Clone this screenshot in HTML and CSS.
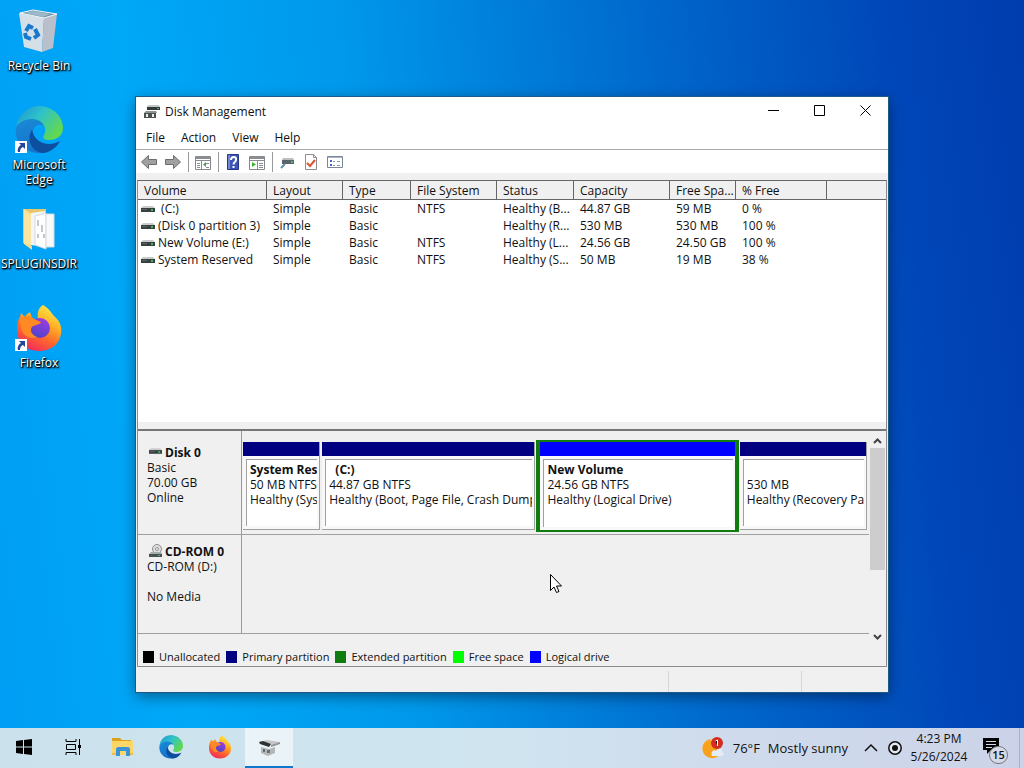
FILE: index.html
```html
<!DOCTYPE html>
<html lang="en">
<head>
    <meta charset="utf-8">
    <title>Disk Management</title>
    <link rel="stylesheet" href="styles.css">
</head>
<body>
    <!-- shared gradients and symbols -->
    <svg class="defs" aria-hidden="true">
        <defs>
            <linearGradient id="edgeTop" x1="0" y1="0" x2="1" y2="0.6">
                <stop offset="0" stop-color="#1c93d6"/>
                <stop offset="0.5" stop-color="#2fc3c8"/>
                <stop offset="1" stop-color="#62d84e"/>
            </linearGradient>
            <linearGradient id="edgeLeft" x1="0" y1="0" x2="0.4" y2="1">
                <stop offset="0" stop-color="#1b8ad6"/>
                <stop offset="1" stop-color="#1473cc"/>
            </linearGradient>
            <linearGradient id="foxBody" x1="0.8" y1="0" x2="0.3" y2="1">
                <stop offset="0" stop-color="#fff04a"/>
                <stop offset="0.35" stop-color="#ffb326"/>
                <stop offset="0.65" stop-color="#ff6a2a"/>
                <stop offset="1" stop-color="#f0285e"/>
            </linearGradient>
            <linearGradient id="foxGlobe" x1="0.7" y1="0" x2="0.3" y2="1">
                <stop offset="0" stop-color="#a03be0"/>
                <stop offset="1" stop-color="#4b45c8"/>
            </linearGradient>
        </defs>
        <symbol id="edge" viewBox="0 0 48 48">
            <path fill="url(#edgeLeft)" d="M1 22C4 9 27 7 29 20C23 16 17 21 18 29C20 39 31 43 43 37C38 44 31 48 23 47C8 46-1 34 1 22Z"/>
            <path fill="#0d4f9e" d="M17 24C12 31 14 44 27 47C35 47 42 41 45 35C34 41 20 38 17 24Z"/>
            <path fill="url(#edgeTop)" d="M1 21C3 8 13 0 25 0C39 1 48 11 48 22C48 31 40 34 34 34C29 34 27 32 29 29C33 22 27 13 17 13C9 13 4 17 1 21Z"/>
        </symbol>
        <symbol id="firefox" viewBox="0 0 48 48">
            <path fill="url(#foxBody)" d="M28 1C35 5 36 9 40 13C46 18 47 25 46 30C44 41 35 47 24 47C11 47 2 38 2 26C2 20 3 16 5 13L6 9L10 13C12 9 14 9 15 8L17 14L23 17C22 9 23 4 28 1Z"/>
            <circle cx="25" cy="24" r="10" fill="url(#foxGlobe)"/>
            <path fill="#ff8a24" d="M5 15C10 11 16 11 19 15L26 18C25 21 20 21 18 22C14 25 16 31 22 33C15 36 8 32 6 24Z"/>
        </symbol>
        <symbol id="shortcut" viewBox="0 0 12 12">
            <path fill="#fff" d="M0 0H12V12H0Z"/>
            <path fill="#24449c" d="M4 2H10V8L8 6C6 7 5 8 5 11H3C2 8 4 5 6 4Z"/>
        </symbol>
        <symbol id="drive" viewBox="0 0 14 8">
            <path fill="#c9cccc" d="M2 1H12L14 3H0Z"/>
            <path fill="#39403f" d="M0 3H14V7H0Z"/>
            <path fill="#5c6463" d="M1 4H6V5H1Z"/>
            <path fill="#35b95a" d="M10 4H12V6H10Z"/>
        </symbol>
        <symbol id="disks" viewBox="0 0 16 16">
            <path fill="#c4c7c8" d="M4 1H15L16 3H3Z"/>
            <path fill="#333838" d="M3 3H16V6H3Z"/>
            <path fill="#4fae68" d="M13 4H15V5H13Z"/>
            <path fill="#8f9394" d="M2 7H12L13 9H0Z"/>
            <path fill="#4c5252" d="M0 9H12V14H0Z"/>
            <path fill="#eee" d="M2 10H4V13H2ZM8 10H10V13H8Z"/>
        </symbol>
    </svg>

    <div class="desktop">
        <nav class="shortcuts" aria-label="Desktop">
            <a href="#" class="shortcut">
                <svg class="shortcut-icon" viewBox="0 0 48 48">
                    <path fill="#6f97ae" d="M5 6L18 3L41 7L29 12Z"/>
                    <path fill="#9db9c7" d="M10 6L19 4L35 7L28 10Z"/>
                    <path fill="#d5dfe8" d="M4 6L29 11L27 45L9 40Z"/>
                    <path fill="#b9c0cb" d="M29 11L42 7L38 41L27 45Z"/>
                    <path fill="none" stroke="#f1f6f9" d="M5 6L29 11L42 7L18 3Z"/>
                    <g fill="none" stroke="#1878cc" stroke-width="4">
                        <path d="M11 24L14 19L18 21"/>
                        <path d="M20 22L23 28L19 31"/>
                        <path d="M16 32L11 30L10 26"/>
                    </g>
                </svg>
                <span class="shortcut-name">Recycle Bin</span>
            </a>
            <a href="#" class="shortcut">
                <svg class="shortcut-icon" viewBox="0 0 48 48"><use href="#edge"/><use href="#shortcut" x="0" y="35" width="12" height="12"/></svg>
                <span class="shortcut-name">Microsoft Edge</span>
            </a>
            <a href="#" class="shortcut">
                <svg class="shortcut-icon" viewBox="0 0 48 48">
                    <path fill="#e8c66a" d="M8 4H31V40H12L8 38Z"/>
                    <path fill="#fbe4a0" d="M9 4L16 9V44L9 39Z"/>
                    <path fill="#f4f5f6" d="M16 8L30 6V42L16 40Z"/>
                    <path fill="#fff" stroke="#d6dadd" d="M20 11L31 8V44L20 40Z"/>
                    <path fill="#f8f9fa" stroke="#d6dadd" d="M31 9H39V42H31Z"/>
                    <path fill="none" stroke="#c3c8cb" stroke-width="2" d="M23 15V21M27 20V27M23 29V33M29 29V33"/>
                    <path fill="#f6d98b" d="M9 38L17 41V45Z"/>
                </svg>
                <span class="shortcut-name">SPLUGINSDIR</span>
            </a>
            <a href="#" class="shortcut">
                <svg class="shortcut-icon" viewBox="0 0 48 48"><use href="#firefox"/><use href="#shortcut" x="0" y="35" width="12" height="12"/></svg>
                <span class="shortcut-name">Firefox</span>
            </a>
        </nav>

        <main class="window">
            <header class="titlebar">
                <svg class="title-icon"><use href="#disks"/></svg>
                <h1 class="title">Disk Management</h1>
                <button type="button" class="win-button" aria-label="Minimize"><svg class="win-glyph" viewBox="0 0 11 11"><path d="M0 5.500H11"/></svg></button>
                <button type="button" class="win-button" aria-label="Maximize"><svg class="win-glyph" viewBox="0 0 11 11"><path d="M.5 .5H10.500V10.500H.5Z"/></svg></button>
                <button type="button" class="win-button" aria-label="Close"><svg class="win-glyph" viewBox="0 0 11 11"><path d="M.5 .5L10.500 10.500M10.500 .5L.5 10.500"/></svg></button>
            </header>
            <nav class="menubar">
                <button type="button" class="menu">File</button>
                <button type="button" class="menu">Action</button>
                <button type="button" class="menu">View</button>
                <button type="button" class="menu">Help</button>
            </nav>
            <div class="toolbar">
                <button type="button" class="tool" aria-label="Back"><svg class="tool-icon" viewBox="0 0 16 16"><path fill="#a0a0a0" stroke="#6c6c6c" d="M.5 8L7.500 1.500V5.500H15.500V10.500H7.500V14.500Z"/></svg></button>
                <button type="button" class="tool" aria-label="Forward"><svg class="tool-icon" viewBox="0 0 16 16"><path fill="#a0a0a0" stroke="#6c6c6c" d="M15.500 8L8.500 1.500V5.500H.5V10.500H8.500V14.500Z"/></svg></button>
                <span class="separator"></span>
                <button type="button" class="tool" aria-label="Show console tree">
                    <svg class="tool-icon" viewBox="0 0 16 16">
                        <path fill="#fff" stroke="#85888c" d="M.5 2.500H15.500V15.500H.5Z"/>
                        <path fill="#8a8d91" d="M1 2H15V5H1ZM1 6H15V7H1ZM6 7H7V15H6ZM2 9H5V10H2ZM2 11H5V12H2ZM2 13H5V14H2ZM11 9H14V10H11ZM11 13H14V14H11Z"/>
                        <path fill="#4d9b52" d="M8 10.500L11 8V13Z"/>
                    </svg>
                </button>
                <span class="separator"></span>
                <button type="button" class="tool" aria-label="Help">
                    <svg class="tool-icon" viewBox="0 0 16 16">
                        <path fill="#3d55b5" stroke="#27378a" d="M2.500 .5H13.500V15.500H2.500Z"/>
                        <path fill="#7385d4" d="M3 1H5V15H3Z"/>
                        <path fill="none" stroke="#fff" stroke-width="2" d="M6 6C6 2 12 2 11 6C11 8 8.500 8 8.500 10.500M8.500 12V14"/>
                    </svg>
                </button>
                <button type="button" class="tool" aria-label="Show action pane">
                    <svg class="tool-icon" viewBox="0 0 16 16">
                        <path fill="#fff" stroke="#85888c" d="M.5 2.500H15.500V15.500H.5Z"/>
                        <path fill="#8a8d91" d="M1 2H15V5H1ZM1 6H15V7H1ZM8 7H9V15H8ZM10 9H14V10H10ZM10 11H14V12H10ZM10 13H14V14H10Z"/>
                        <path fill="#3fb52f" d="M3 8L7 10.500L3 13Z"/>
                    </svg>
                </button>
                <span class="separator"></span>
                <button type="button" class="tool" aria-label="Refresh">
                    <svg class="tool-icon" viewBox="0 0 16 16">
                        <path fill="#b8c0c4" d="M4 4H14L15 6H3Z"/>
                        <path fill="#59656b" d="M3 6H15V10H3Z"/>
                        <path fill="#58b070" d="M12 7H14V9H12Z"/>
                        <path fill="none" stroke="#5f90ad" stroke-width="2" d="M6 10L2 14"/>
                    </svg>
                </button>
                <button type="button" class="tool" aria-label="Check">
                    <svg class="tool-icon" viewBox="0 0 16 16">
                        <path fill="#fff" stroke="#8d8d8d" d="M2.500 .5H10.500L13.500 3.500V15.500H2.500Z"/>
                        <path fill="none" stroke="#8d8d8d" d="M10.500 .5V3.500H13.500"/>
                        <path fill="none" stroke="#e0532f" stroke-width="2" d="M4 9L7 12L12 6"/>
                    </svg>
                </button>
                <button type="button" class="tool" aria-label="Properties">
                    <svg class="tool-icon" viewBox="0 0 16 16">
                        <path fill="#fff" stroke="#7a8798" d="M.5 2.500H15.500V13.500H.5Z"/>
                        <path fill="#a9b4c6" d="M1 3H15V4H1Z"/>
                        <path fill="#4169c8" d="M3 6H5V8H3ZM3 10H5V12H3Z"/>
                        <path fill="#8b96a6" d="M6 7H8V8H6ZM10 7H13V8H10ZM6 11H8V12H6ZM10 11H13V12H10Z"/>
                    </svg>
                </button>
            </div>

            <div class="console">
                <section class="volumes">
                    <table class="volume-table">
                        <colgroup>
                            <col class="col-volume"><col class="col-layout"><col class="col-type"><col class="col-fs">
                            <col class="col-status"><col class="col-capacity"><col class="col-space"><col class="col-percent"><col>
                        </colgroup>
                        <thead>
                            <tr><th>Volume</th><th>Layout</th><th>Type</th><th>File System</th><th>Status</th><th>Capacity</th><th>Free Spa...</th><th>% Free</th><th></th></tr>
                        </thead>
                        <tbody>
                            <tr><td><svg class="drive"><use href="#drive"/></svg>&nbsp;(C:)</td><td>Simple</td><td>Basic</td><td>NTFS</td><td>Healthy (B...</td><td>44.87 GB</td><td>59 MB</td><td>0 %</td><td></td></tr>
                            <tr><td><svg class="drive"><use href="#drive"/></svg>(Disk 0 partition 3)</td><td>Simple</td><td>Basic</td><td></td><td>Healthy (R...</td><td>530 MB</td><td>530 MB</td><td>100 %</td><td></td></tr>
                            <tr><td><svg class="drive"><use href="#drive"/></svg>New Volume (E:)</td><td>Simple</td><td>Basic</td><td>NTFS</td><td>Healthy (L...</td><td>24.56 GB</td><td>24.50 GB</td><td>100 %</td><td></td></tr>
                            <tr><td><svg class="drive"><use href="#drive"/></svg>System Reserved</td><td>Simple</td><td>Basic</td><td>NTFS</td><td>Healthy (S...</td><td>50 MB</td><td>19 MB</td><td>38 %</td><td></td></tr>
                        </tbody>
                    </table>
                </section>

                <section class="disk-pane">
                    <div class="disks">
                        <div class="disk">
                            <div class="disk-label">
                                <h2 class="disk-name"><svg class="disk-icon" viewBox="0 0 16 14"><use href="#drive" x="2" y="2" width="13" height="8"/></svg>Disk 0</h2>
                                <p>Basic</p>
                                <p>70.00 GB</p>
                                <p>Online</p>
                            </div>
                            <div class="partitions">
                                <div class="partition">
                                    <div class="partition-body"><b>System Res</b><p>50 MB NTFS</p><p>Healthy (Sys</p></div>
                                </div>
                                <div class="partition">
                                    <div class="partition-body"><b>&nbsp; (C:)</b><p>44.87 GB NTFS</p><p>Healthy (Boot, Page File, Crash Dump,</p></div>
                                </div>
                                <div class="partition logical">
                                    <div class="partition-body"><b>New Volume</b><p>24.56 GB NTFS</p><p>Healthy (Logical Drive)</p></div>
                                </div>
                                <div class="partition">
                                    <div class="partition-body"><b>&nbsp;</b><p>530 MB</p><p>Healthy (Recovery Pa</p></div>
                                </div>
                            </div>
                        </div>
                        <div class="disk cdrom">
                            <div class="disk-label">
                                <h2 class="disk-name">
                                    <svg class="disk-icon" viewBox="0 0 16 14">
                                        <circle cx="10" cy="5" r="4.500" fill="#dedede" stroke="#8e8e8e"/>
                                        <circle cx="10" cy="5" r="1.500" fill="#fff" stroke="#8e8e8e"/>
                                        <path fill="#a5abab" d="M4 8H14L15 10H2Z"/>
                                        <path fill="#465250" d="M2 10H15V13H2Z"/>
                                        <path fill="#54b473" d="M11 11H13V12H11Z"/>
                                    </svg>CD-ROM 0</h2>
                                <p>CD-ROM (D:)</p>
                                <p>&nbsp;</p>
                                <p>No Media</p>
                            </div>
                            <div class="empty"></div>
                        </div>
                    </div>
                    <div class="scrollbar">
                        <button type="button" class="scroll-button" aria-label="Scroll up"><svg class="scroll-glyph" viewBox="0 0 9 6"><path d="M1 5L4.500 1.500L8 5"/></svg></button>
                        <div class="scroll-track"><div class="scroll-thumb"></div></div>
                        <button type="button" class="scroll-button" aria-label="Scroll down"><svg class="scroll-glyph" viewBox="0 0 9 6"><path d="M1 1L4.500 4.500L8 1"/></svg></button>
                    </div>
                </section>

                <ul class="legend">
                    <li class="unallocated">Unallocated</li>
                    <li class="primary">Primary partition</li>
                    <li class="extended">Extended partition</li>
                    <li class="free">Free space</li>
                    <li class="logical-drive">Logical drive</li>
                </ul>
            </div>
            <footer class="statusbar"><span></span><span></span><span></span></footer>
        </main>

        <svg class="pointer" viewBox="0 0 12 20"><path fill="#fff" stroke="#000" d="M.5 .5V16.500L4 13L6.500 18.500L9 17.500L6.500 12H11.500Z"/></svg>
    </div>

    <footer class="taskbar">
        <button type="button" class="task" aria-label="Start"><svg class="task-small" viewBox="0 0 16 16"><path d="M0 2L7 1V7.500H0ZM8 1L16 0V7.500H8ZM0 8.500H7V15L0 14ZM8 8.500H16V16L8 15Z"/></svg></button>
        <button type="button" class="task" aria-label="Task View">
            <svg class="task-small" viewBox="0 0 16 16">
                <path fill="none" stroke="#000" d="M1 0V2.500H11V0M1.500 5.500H10.500V10.500H1.500ZM1 16V13.500H11V16M14.500 0V16"/>
                <path d="M13 6H16V9H13Z"/>
            </svg>
        </button>
        <button type="button" class="task" aria-label="File Explorer">
            <svg class="task-icon" viewBox="0 0 24 24">
                <path fill="#dba11f" d="M2 3H10L12 5H21V9H2Z"/>
                <path fill="#fcd667" d="M2 6H23V20H2Z"/>
                <path fill="#3a92d8" d="M6 14C6 13 7 12 8 12H18C19 12 20 13 20 14V21H16V16H10V21H6Z"/>
                <path fill="#f0bd44" d="M2 18H6V20H2ZM20 18H23V20H20Z"/>
            </svg>
        </button>
        <button type="button" class="task" aria-label="Microsoft Edge"><svg class="task-icon"><use href="#edge"/></svg></button>
        <button type="button" class="task" aria-label="Firefox"><svg class="task-icon"><use href="#firefox"/></svg></button>
        <button type="button" class="task active" aria-label="Disk Management">
            <svg class="task-icon" viewBox="0 0 24 24">
                <path fill="#c4c6c7" d="M2 7L10 5L23 7L14 10Z"/>
                <path fill="#2f3232" d="M2 7L6 6L14 9L12 12L3 9Z"/>
                <path fill="#8f9394" d="M14 10L23 7V9L14 12Z"/>
                <path fill="#b4b7b8" d="M4 12L12 14L18 12V18L11 21L4 18Z"/>
                <path fill="#6a6d6e" d="M6 14H8V17H6ZM10 15H13V18H10Z"/>
            </svg>
        </button>
        <div class="tray">
            <button type="button" class="weather">
                <svg class="weather-icon" viewBox="0 0 24 24">
                    <path fill="#f7a823" d="M10 3C3 4 0 10 2 16C5 23 14 24 19 19C11 18 7 11 10 3Z"/>
                    <circle cx="10" cy="13" r="8" fill="#f9a01b"/>
                    <path fill="#e4ecf5" d="M11 20C9 16 13 13 15 15C17 11 22 13 21 16C24 17 23 20 20 20Z"/>
                    <circle cx="16" cy="7" r="6" fill="#d42c20"/>
                    <path stroke="#fff" d="M14.500 5L16.500 4V10"/>
                </svg>
                <span>76°F</span><span>Mostly sunny</span>
            </button>
            <button type="button" class="tray-button" aria-label="Show hidden icons"><svg class="tray-icon" viewBox="0 0 14 14"><path fill="none" stroke="#111" stroke-width="1.500" d="M1 10L7 4L13 10"/></svg></button>
            <button type="button" class="tray-button" aria-label="Recording"><svg class="tray-icon" viewBox="0 0 14 14"><circle cx="7" cy="7" r="6.200" fill="#e4e8f2" stroke="#111" stroke-width="1.500"/><circle cx="7" cy="7" r="3" fill="#111"/></svg></button>
            <button type="button" class="clock"><span>4:23 PM</span><span>5/26/2024</span></button>
            <button type="button" class="notifications" aria-label="Notifications">
                <svg class="note-icon" viewBox="0 0 16 16"><path fill="#000" d="M0 0H16V12H8L4 16V12H0Z"/><path stroke="#d3d9ea" d="M3 3.500H13M3 6.500H13M3 9.500H9"/></svg>
                <span class="badge">15</span>
            </button>
        </div>
    </footer>
</body>
</html>
```
FILE: styles.css
```css
* {
    box-sizing: border-box;
}
body {
    margin: 0;
    min-height: 100vh;
    display: flex;
    flex-direction: column;
    font-family: "Open Sans", "Noto Sans", sans-serif;
    font-size: 12px;
    color: #111;
    background: linear-gradient(84deg, #009ef4 0%, #00a8f8 18%, #0098ea 38%, #0068cc 66%, #0046b8 88%, #003cae 100%);
}
button {
    margin: 0;
    padding: 0;
    border: 0;
    background: none;
    font: inherit;
    color: inherit;
}
p, h1, h2, ul {
    margin: 0;
    padding: 0;
    font-size: 12px;
}
.defs {
    position: absolute;
    width: 0;
    height: 0;
}
.desktop {
    position: relative;
    flex: 1;
}

/* desktop icons */
.shortcuts {
    display: grid;
    grid-auto-rows: 99px;
    width: 78px;
    padding-top: 7px;
}
.shortcut {
    display: flex;
    flex-direction: column;
    align-items: center;
    gap: 3px;
    color: #fff;
    text-decoration: none;
    text-align: center;
}
.shortcut-icon {
    width: 48px;
    height: 48px;
}
.shortcut-name {
    line-height: 15px;
    width: 64px;
    display: flex;
    justify-content: center;
    text-shadow: 1px 1px 2px #000, 0 1px 2px #000, 1px 1px 1px #000;
}

/* window */
.window {
    position: absolute;
    top: 97px;
    right: 136px;
    bottom: 36px;
    left: 136px;
    display: flex;
    flex-direction: column;
    background: #f0f0f0;
    outline: 1px solid #1b5a86;
    box-shadow: 0 4px 14px rgba(0, 0, 0, 0.45);
}
.titlebar {
    display: flex;
    align-items: center;
    height: 29px;
    padding-left: 8px;
    background: #fff;
}
.title-icon {
    width: 16px;
    height: 16px;
}
.title {
    flex: 1;
    padding-left: 5px;
    font-weight: normal;
}
.win-button {
    width: 46px;
    height: 29px;
}
.win-glyph {
    width: 11px;
    height: 11px;
    fill: none;
    stroke: #000;
}
.menubar {
    display: flex;
    height: 24px;
    padding-left: 2px;
    background: #fff;
    border-bottom: 1px solid #a8a8a8;
}
.menu {
    padding: 0 8px;
}
.toolbar {
    display: flex;
    align-items: center;
    height: 23px;
    padding-left: 1px;
    background: #fff;
}
.tool {
    display: flex;
    justify-content: center;
    width: 24px;
}
.tool-icon {
    width: 16px;
    height: 16px;
}
.separator {
    width: 6px;
    height: 20px;
    background: linear-gradient(#999, #999) center / 1px 100% no-repeat;
}
.console {
    flex: 1;
    display: flex;
    flex-direction: column;
    min-height: 0;
    margin: 7px 1px 0;
    border: 1px solid #8c8c8c;
    border-top-color: #666;
}

/* volume list */
.volumes {
    flex: 1;
    min-height: 0;
    background: #fff;
    border-bottom: 7px solid #f0f0f0;
}
.volume-table {
    width: 100%;
    table-layout: fixed;
    border-collapse: separate;
    border-spacing: 0;
}
.volume-table th {
    height: 19px;
    padding: 1px 0 0 6px;
    background: #f0f0f0;
    border-right: 1px solid #666;
    border-bottom: 1px solid #666;
    line-height: 17px;
    font-weight: normal;
    text-align: left;
    white-space: nowrap;
}
.volume-table th:last-child {
    border-right: 0;
}
.volume-table td {
    padding: 0 0 0 6px;
    line-height: 17px;
    white-space: nowrap;
}
.volume-table td:first-child {
    padding-left: 3px;
}
.col-volume { width: 129px; }
.col-layout { width: 76px; }
.col-type { width: 68px; }
.col-fs { width: 86px; }
.col-status { width: 77px; }
.col-capacity { width: 96px; }
.col-space { width: 66px; }
.col-percent { width: 91px; }
.drive {
    width: 14px;
    height: 8px;
    margin-right: 3px;
}

/* graphical disk view */
.disk-pane {
    display: flex;
    border-top: 2px solid #777;
    background: #f0f0f0;
}
.disks {
    flex: 1;
    min-width: 0;
    padding-bottom: 10px;
}
.disk {
    display: flex;
    height: 104px;
    border-bottom: 1px solid #a0a0a0;
}
.disk.cdrom {
    height: 99px;
}
.disk-label {
    width: 104px;
    padding: 14px 0 0 9px;
    border-right: 1px solid #999;
    line-height: 15px;
}
.cdrom .disk-label {
    padding-top: 9px;
}
.disk-name {
    display: flex;
    line-height: 15px;
}
.disk-icon {
    width: 16px;
    height: 14px;
    margin-right: 2px;
}
.empty {
    flex: 1;
}
.partitions {
    flex: 1;
    min-width: 0;
    display: grid;
    grid-template-columns: 79fr 215fr 202fr 129fr;
    padding: 9px 1px 2px 0;
}
.partition {
    display: flex;
    flex-direction: column;
    min-width: 0;
    margin: 2px 1px;
    border-right: 1px solid #a0a0a0;
    border-bottom: 1px solid #a0a0a0;
    background: #f8f8f8;
}
.partition::before {
    content: "";
    height: 14px;
    background: #000080;
    border-bottom: 1px solid #f8f8f8;
}
.partition-body {
    flex: 1;
    margin: 2px 2px 3px 3px;
    padding: 2px 0 0 3px;
    border-top: 1px solid #a0a0a0;
    border-left: 1px solid #a0a0a0;
    background: #fff;
    line-height: 15px;
    white-space: nowrap;
}
.partition-body b,
.partition-body p {
    display: block;
    overflow: hidden;
}
.partition.logical {
    margin: 0;
    border: solid #107c10;
    border-width: 2px 4px;
}
.partition.logical::before {
    background: #0000ff;
}
.scrollbar {
    display: flex;
    flex-direction: column;
    width: 17px;
    background: #f0f0f0;
}
.scroll-button {
    height: 17px;
}
.scroll-glyph {
    width: 9px;
    height: 6px;
    fill: none;
    stroke: #444;
    stroke-width: 2;
}
.scroll-track {
    flex: 1;
}
.scroll-thumb {
    height: 68%;
    margin: 0 1px;
    background: #cdcdcd;
}
.legend {
    display: flex;
    gap: 6px;
    height: 22px;
    padding: 3px 5px 0;
    list-style: none;
    font-size: 11px;
    line-height: 18px;
}
.legend li {
    display: flex;
    align-items: center;
    gap: 5px;
}
.legend li::before {
    content: "";
    width: 11px;
    height: 12px;
    background: #000;
}
.legend .primary::before { background: #000080; }
.legend .extended::before { background: #107c10; }
.legend .free::before { background: #00ff00; }
.legend .logical-drive::before { background: #0000ff; }
.statusbar {
    display: grid;
    grid-template-columns: 1fr 133px 86px;
    height: 25px;
    padding: 4px 0 0 2px;
}
.statusbar span {
    border-right: 1px solid #d7d7d7;
}
.statusbar span:last-child {
    border-right: 0;
}
.pointer {
    position: absolute;
    left: 550px;
    top: 574px;
    width: 12px;
    height: 20px;
}

/* taskbar */
.taskbar {
    display: flex;
    gap: 1px;
    height: 40px;
    background: linear-gradient(90deg, #cbe2ec, #cfe5f0 45%, #cfdaec 75%, #ccd3e8);
}
.task {
    display: flex;
    justify-content: center;
    align-items: center;
    width: 48px;
    border-bottom: 2px solid transparent;
}
.active {
    background: #eaf4f8;
    border-bottom-color: #0f78cc;
}
.task-icon {
    width: 24px;
    height: 24px;
}
.task-small {
    width: 16px;
    height: 16px;
}
.tray {
    display: flex;
    margin-left: auto;
    padding-right: 4px;
}
.weather {
    display: flex;
    align-items: center;
    gap: 8px;
    padding-right: 11px;
    font-size: 13px;
}
.weather-icon {
    width: 24px;
    height: 24px;
}
.tray-button {
    display: flex;
    justify-content: center;
    align-items: center;
    width: 24px;
}
.tray-icon {
    width: 14px;
    height: 14px;
}
.clock {
    display: flex;
    flex-direction: column;
    justify-content: center;
    align-items: center;
    width: 64px;
    line-height: 18px;
}
.notifications {
    position: relative;
    width: 49px;
    padding-right: 8px;
    border-right: 1px solid #aab4c8;
}
.note-icon {
    width: 16px;
    height: 16px;
}
.badge {
    position: absolute;
    left: 18px;
    top: 18px;
    width: 19px;
    height: 18px;
    border: 1px solid #777;
    border-radius: 9px;
    background: #d6dae8;
    font-size: 11px;
    line-height: 16px;
    font-weight: 600;
}
```
